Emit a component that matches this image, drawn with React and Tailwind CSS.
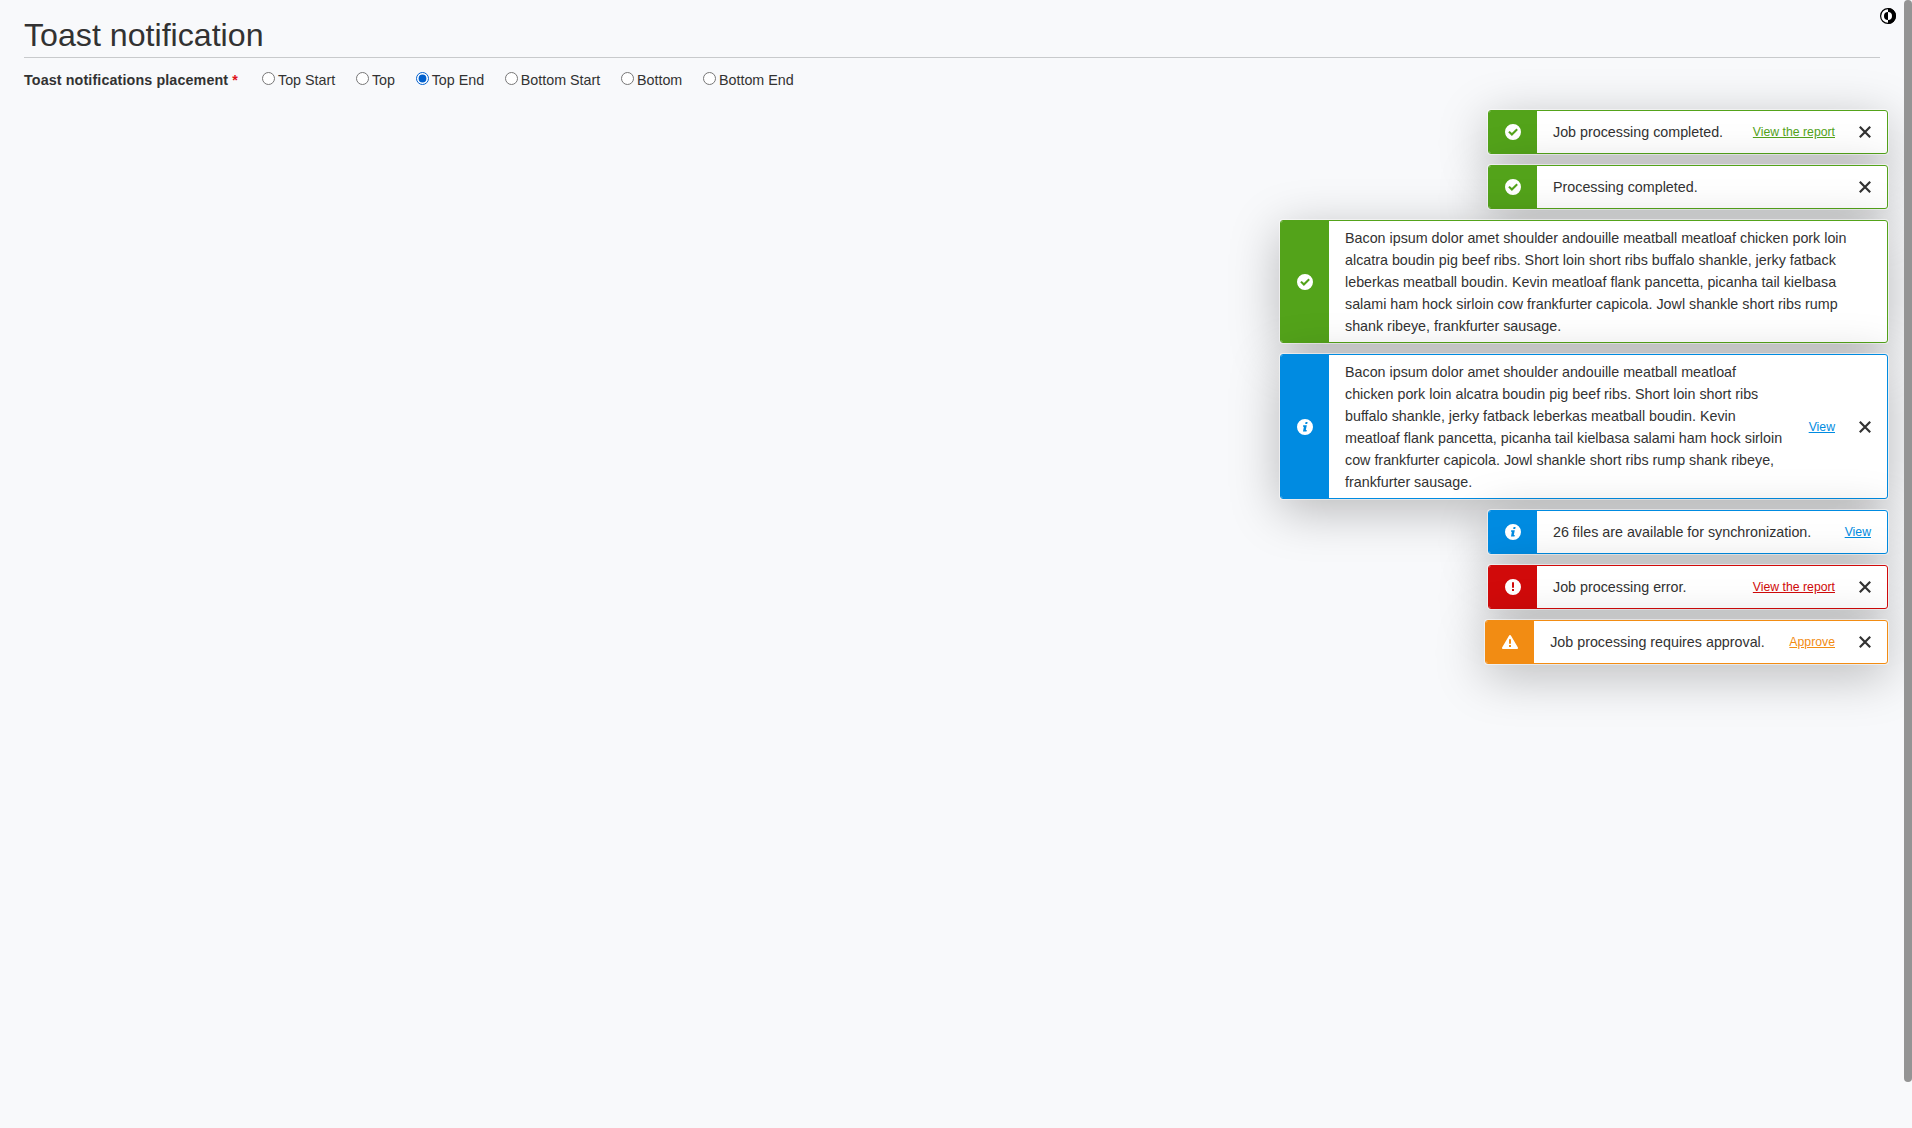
import React from "react";

const CHECK = (
  <path fillRule="evenodd" d="M8 0a8 8 0 1 0 0 16A8 8 0 0 0 8 0Zm4.9 5.9-1.4-1.4L6.9 9.1 4.7 6.9 3.2 8.3l3.7 3.7 6-6.1Z" />
);
const INFO = (
  <path fillRule="evenodd" d="M8 0a8 8 0 1 0 0 16A8 8 0 0 0 8 0Zm.6 3h2l-.4 2h-2l.4-2ZM6.2 6.2h3.6L8.8 11h1l-.3 1.6H6l.9-4.8h-1l.3-1.6Z" />
);
const ERROR = (
  <path fillRule="evenodd" d="M8 0a8 8 0 1 0 0 16A8 8 0 0 0 8 0ZM7 3.2h2v5.6H7V3.2ZM7 10h2v2H7v-2Z" />
);
const WARNING = (
  <path fillRule="evenodd" d="M8 1a1 1 0 0 1 .9.5l7 12.1A1 1 0 0 1 15 15H1a1 1 0 0 1-.9-1.4l7-12.1A1 1 0 0 1 8 1ZM7 5.2v4.5h2V5.2H7Zm0 5.8v2h2v-2H7Z" />
);

const TONES = {
  success: { icon: CHECK, box: "border-[#53a31a]", fill: "bg-[#53a31a]", link: "text-[#53a31a]" },
  info: { icon: INFO, box: "border-[#008be1]", fill: "bg-[#008be1]", link: "text-[#008be1]" },
  error: { icon: ERROR, box: "border-[#d10a0a]", fill: "bg-[#d10a0a]", link: "text-[#d10a0a]" },
  warning: { icon: WARNING, box: "border-[#f28c13]", fill: "bg-[#f28c13]", link: "text-[#f28c13]" },
};

const LOREM =
  "Bacon ipsum dolor amet shoulder andouille meatball meatloaf chicken pork loin alcatra boudin pig beef ribs. Short loin short ribs buffalo shankle, jerky fatback leberkas meatball boudin. Kevin meatloaf flank pancetta, picanha tail kielbasa salami ham hock sirloin cow frankfurter capicola. Jowl shankle short ribs rump shank ribeye, frankfurter sausage.";

const TOASTS = [
  { tone: "success", text: "Job processing completed.", action: "View the report", close: true },
  { tone: "success", text: "Processing completed.", close: true },
  { tone: "success", text: LOREM },
  { tone: "info", text: LOREM, action: "View", close: true },
  { tone: "info", text: "26 files are available for synchronization.", action: "View" },
  { tone: "error", text: "Job processing error.", action: "View the report", close: true },
  { tone: "warning", text: "Job processing requires approval.", action: "Approve", close: true },
];

const PLACEMENTS = ["Top Start", "Top", "Top End", "Bottom Start", "Bottom", "Bottom End"];

function Toast({ tone, text, action, close }) {
  const t = TONES[tone];
  return (
    <div
      className={`flex min-h-11 min-w-[400px] max-w-[608px] overflow-hidden rounded-[3px] border bg-white shadow-[0_0_0_1px_rgba(255,255,255,0.5),0_11px_50px_rgba(0,0,0,0.27)] ${t.box}`}
    >
      <div className={`flex w-12 shrink-0 items-center justify-center ${t.fill}`}>
        <svg className="size-4 fill-white" viewBox="0 0 16 16">{t.icon}</svg>
      </div>
      <div className="flex grow items-center pr-4 pl-4">
        <p className={`grow py-[5.5px] ${action ? "mr-[24.6px]" : "mr-6"}`}>{text}</p>
        {action && (
          <a href="#" className={`shrink-0 text-[12.25px] whitespace-nowrap underline ${t.link}`}>
            {action}
          </a>
        )}
        {close && (
          <button className="ml-6 shrink-0">
            <svg className="size-3 stroke-[#323232] stroke-[2.2]" viewBox="0 0 12 12">
              <path d="M.8.8l10.4 10.4M11.2.8.8 11.2" />
            </svg>
          </button>
        )}
      </div>
    </div>
  );
}

export default function App() {
  return (
    <div className="flex h-[1128px] w-full overflow-hidden bg-[#f8f9fb] font-['Liberation_Sans',sans-serif] text-[14.3px] leading-[22px] text-[#323232]">
      <div className="flex min-w-0 grow flex-col">
        <div className="flex">
          <header className="ml-6 h-[58px] grow border-b border-[#c8cacc] pt-3">
            <h1 className="text-[32.175px] leading-[46px]">Toast notification</h1>
          </header>
          <button className="mr-2 flex h-6 w-4 shrink-0 items-end">
            <svg className="size-4" viewBox="0 0 16 16">
              <circle cx="8" cy="8" r="7.4" fill="white" stroke="black" strokeWidth="1.2" />
              <path d="M8 0a8 8 0 0 1 0 16v-4a4 4 0 0 0 0-8Z" fill="black" />
              <path d="M8 4a4 4 0 0 0 0 8Z" fill="black" />
            </svg>
          </button>
        </div>
        <div className="mt-[11px] ml-6 flex h-[22px] items-center">
          <span className="w-[238px] font-bold tracking-[0.12px]">
            Toast notifications placement <span className="text-[#e0141a]">*</span>
          </span>
          <div className="flex gap-[20.7px]">
            {PLACEMENTS.map((p) => (
              <label key={p} className="flex whitespace-nowrap">
                <input
                  type="radio"
                  name="placement"
                  defaultChecked={p === "Top End"}
                  className="mt-[3px] mr-[3px] size-[13px] accent-[#005fcc]"
                />
                {p}
              </label>
            ))}
          </div>
        </div>
        <div className="mt-[19px] mr-4 flex flex-col items-end gap-[11px]">
          {TOASTS.map((t, i) => (
            <Toast key={i} {...t} />
          ))}
        </div>
      </div>
      <div className="h-[1082px] w-2 shrink-0 rounded-full bg-[#949494]" />
    </div>
  );
}
